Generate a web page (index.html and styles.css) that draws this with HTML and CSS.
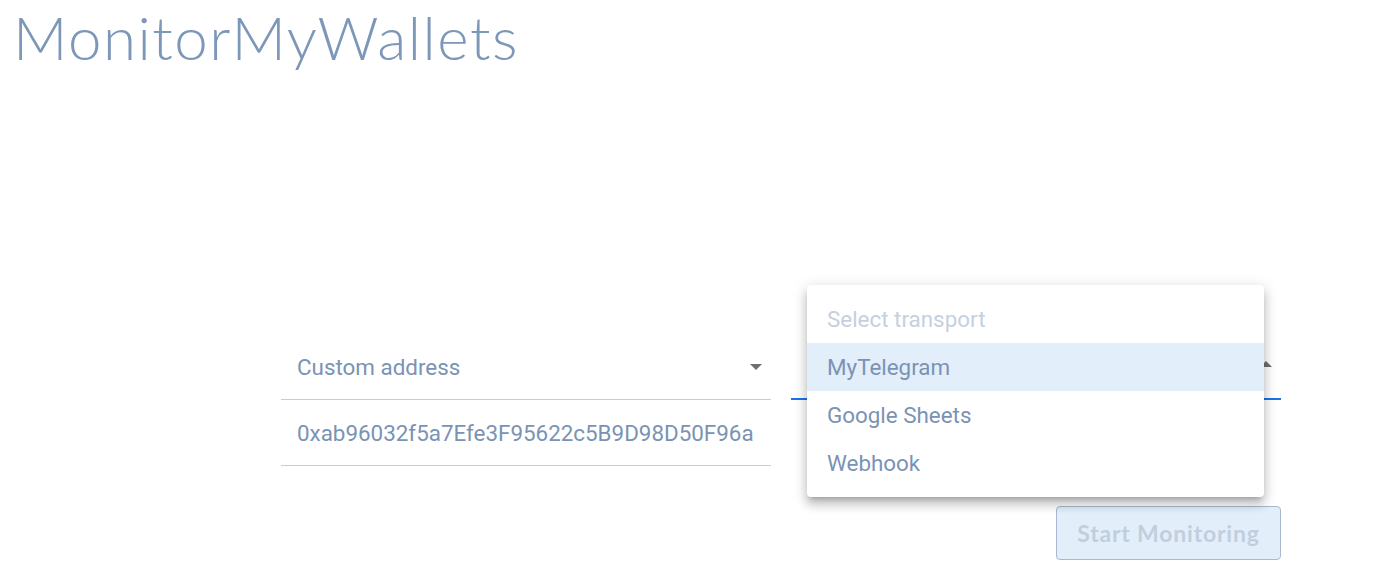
FILE: index.html
```html
<!DOCTYPE html>
<html lang="en">
<head>
<meta charset="utf-8">
<title>MonitorMyWallets</title>
<link rel="stylesheet" href="styles.css">
</head>
<body>
<header class="header">
  <h1 class="logo">MonitorMyWallets</h1>
</header>
<main class="main">
  <div class="form">
    <div class="col col-left">
      <div class="field">
        <span class="field-text">Custom address</span>
        <svg class="caret" width="12" height="6" viewBox="0 0 12 6"><path d="M0 0h12L6 6z" fill="#6f6f6f"/></svg>
      </div>
      <div class="field">
        <span class="field-text">0xab96032f5a7Efe3F95622c5B9D98D50F96a</span>
      </div>
    </div>
    <div class="col col-right">
      <div class="field field-active">
        <svg class="caret caret-up" width="12" height="6" viewBox="0 0 12 6"><path d="M0 6h12L6 0z" fill="#6f6f6f"/></svg>
        <ul class="menu">
          <li class="menu-item placeholder">Select transport</li>
          <li class="menu-item selected">MyTelegram</li>
          <li class="menu-item">Google Sheets</li>
          <li class="menu-item">Webhook</li>
        </ul>
      </div>
      <button class="btn" disabled>Start Monitoring</button>
    </div>
  </div>
</main>
</body>
</html>
```

FILE: styles.css
```css
html, body {
  margin: 0;
  padding: 0;
  background: #ffffff;
}
body {
  font-family: Roboto, "Liberation Sans", sans-serif;
  color: #7b93b4;
}
.header {
  padding: 0 0 0 13px;
}
.logo {
  margin: 0;
  font-family: Lato, "Open Sans", sans-serif;
  font-weight: 300;
  font-size: 60px;
  line-height: 74px;
  color: #7d97b8;
  letter-spacing: 1.5px;
}
.main {
  padding-top: 260px;
  padding-left: 281px;
}
.form {
  display: flex;
  gap: 20px;
  width: 1000px;
}
.col {
  width: 490px;
  display: flex;
  flex-direction: column;
}
.field {
  position: relative;
  height: 66px;
  box-sizing: border-box;
  border-bottom: 1px solid #c8cdd5;
  display: flex;
  align-items: center;
  justify-content: space-between;
  padding: 0 9px 0 16px;
}
.field-text {
  font-size: 22.4px;
  color: #7a93b4;
}
.caret {
  display: block;
  margin-top: 0;
}
.caret-up {
  margin-left: auto;
  margin-top: -4px;
}
.field-active {
  border-bottom: 2px solid #1a73e8;
  height: 66px;
}
.menu {
  position: absolute;
  left: 16px;
  top: -49px;
  width: 457px;
  margin: 0;
  padding: 10px 0;
  list-style: none;
  background: #ffffff;
  border-radius: 4px;
  box-shadow: 0 5px 5px -3px rgba(0,0,0,0.2), 0 8px 10px 1px rgba(0,0,0,0.14), 0 3px 14px 2px rgba(0,0,0,0.12);
  z-index: 2;
}
.menu-item {
  height: 48px;
  line-height: 48px;
  padding: 0 20px;
  font-size: 22.4px;
  color: #7a93b4;
}
.menu-item.placeholder {
  color: #c5d0df;
}
.menu-item.selected {
  background: #e3eefb;
}
.btn {
  align-self: flex-end;
  margin-top: 106px;
  width: 225px;
  height: 54px;
  box-sizing: border-box;
  border: 1px solid #a9b9ce;
  border-radius: 4px;
  background: #e3eefb;
  font-family: Lato, "Open Sans", sans-serif;
  font-weight: 700;
  font-size: 23px;
  letter-spacing: 0.8px;
  color: #c2cede;
  padding: 0;
}
```
